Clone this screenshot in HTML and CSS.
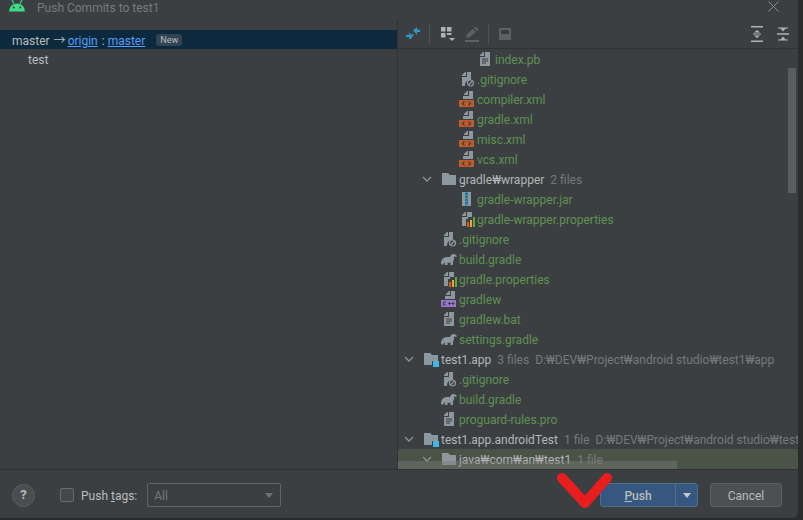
FILE: index.html
```html
<!DOCTYPE html>
<html lang="ko">
<head>
<meta charset="utf-8">
<title>Push Commits to test1</title>
<link rel="stylesheet" href="styles.css">
</head>
<body>
<svg class="defs" width="0" height="0" aria-hidden="true">
  <defs>
    <symbol id="doc" viewBox="0 0 16 16"><path d="M6 1h1v4H3V4zM8 1h5v14H3V6h5z" fill="#8d979e"/><path d="M5 8h6M5 10h6M5 12h4" stroke="#3c3f41" stroke-width="1"/></symbol>
    <symbol id="ignore" viewBox="0 0 16 16"><path d="M6 1h1v4H3V4zM8 1h4v8h-1a5 5 0 0 0-5 5v1H3V6h5z" fill="#8d979e"/><circle cx="11.500" cy="12" r="3" fill="none" stroke="#8d979e" stroke-width="1.200"/><path d="M9.500 14l4-4" stroke="#8d979e" stroke-width="1.200"/></symbol>
    <symbol id="xml" viewBox="0 0 16 16"><path d="M8 0h1v4H5V3zM10 0h4v8H4V5h6z" fill="#8d979e"/><rect x="0" y="9" width="15" height="7" fill="#c05a2a"/><path d="M5.500 10.500L3.500 12.500l2 2M9.500 10.500l2 2-2 2" fill="none" stroke="#3c3f41" stroke-width="1.200"/></symbol>
    <symbol id="props" viewBox="0 0 16 16"><path d="M6 1h1v4H3V4zM8 1h5v5H9v2H7v7H3V6h5z" fill="#8d979e"/><rect x="8" y="11" width="2" height="5" fill="#e05a1c"/><rect x="11" y="9" width="2" height="7" fill="#e8a92c"/><rect x="14" y="6" width="2" height="10" fill="#62a744"/></symbol>
    <symbol id="jar" viewBox="0 0 16 16"><rect x="3" y="1" width="9" height="14" fill="#8d979e"/><rect x="6" y="1" width="3" height="14" fill="#3592c4"/><path d="M6 3h3M6 6h3M6 9h3M6 12h3" stroke="#3c3f41" stroke-width=".8"/></symbol>
    <symbol id="gradle" viewBox="0 0 16 16"><path d="M0 13c0-4 2-7 6-7h3c.5-2 2-3 3.500-3 1.500 0 3 1 3.500 2.500l-1.500.5c-.5-.8-1-1-1.500-.8.5 2 0 4-1 5V14h-2.500v-2.500c-1 .4-2 .4-3 0V14H4v-2.500c-.8.4-1.500 1-2 2.500z" fill="#8d979e"/></symbol>
    <symbol id="shell" viewBox="0 0 16 16"><path d="M8 0h1v4H5V3zM10 0h4v8H4V5h6z" fill="#8d979e"/><rect x="0" y="9" width="15" height="7" fill="#9876c9"/><path d="M5 11H2.500v3H5M7 12.500h3M8.500 11v3M10.500 12.500h3M12 11v3" fill="none" stroke="#3c3f41" stroke-width="1"/></symbol>
    <symbol id="folder" viewBox="0 0 16 16"><path d="M1 2h6l2 2h6v10H1z" fill="#8d979e"/></symbol>
    <symbol id="module" viewBox="0 0 16 16"><path d="M1 2h6l2 2h6v6H9v4H1z" fill="#8d979e"/><rect x="10" y="10" width="6" height="6" fill="#40b6e0"/></symbol>
    <symbol id="chev" viewBox="0 0 12 12"><path d="M2 4l4 4 4-4" fill="none" stroke="#8f9294" stroke-width="1.300"/></symbol>
  </defs>
</svg>
<div class="window">
  <header class="titlebar">
    <svg class="droid" viewBox="0 0 18 12" width="18" height="12"><path d="M1 11.500a8 8 0 0 1 16 0z" fill="#3ddc84"/><path d="M4 0l2 3.500M14 0l-2 3.500" stroke="#3ddc84" stroke-width="1.200"/><circle cx="5.700" cy="7.500" r="1" fill="#3c3f41"/><circle cx="12.300" cy="7.500" r="1" fill="#3c3f41"/></svg>
    <span class="title">Push Commits to test1</span>
    <svg class="close" viewBox="0 0 11 11" width="11" height="11"><path d="M.5.500l10 10M10.500.500l-10 10" stroke="#8b8e90" stroke-width="1"/></svg>
  </header>
  <main class="split">
    <section class="commits">
      <div class="branch"><span>master</span><span class="arrow">→</span><a>origin</a><span class="colon">:</span><a>master</a><span class="tag">New</span></div>
      <div class="commit">test</div>
    </section>
    <section class="changes">
      <div class="toolbar">
        <svg class="tool t-diff" viewBox="0 0 16 16"><path d="M8 4.500L12 1v2.500h3v2.500h-3v3zM1 9h3V6.500l4 3.500-4 3.500V11H1z" fill="#3592c4"/><path d="M9 8l-3 5h-1.500l3-5z" fill="#3592c4"/></svg>
        <i class="sep"></i>
        <svg class="tool t-group" viewBox="0 0 16 16"><path d="M0 1h4.500v4.500H0zM6 1h4.500v4.500H6zM0 7h4.500v4.500H0zM6 7h4.500v2H6z" fill="#afb1b3"/><path d="M8 12h6l-3 3z" fill="#afb1b3"/></svg>
        <svg class="tool t-edit" viewBox="0 0 16 16"><path d="M9 3l3 3-6 5-4 1 1-4zM10 2l1.500-1.500 3 3L13 5z" fill="#5e6062"/><rect x="1" y="14" width="14" height="2" fill="#5e6062"/></svg>
        <i class="sep s2"></i>
        <svg class="tool t-save" viewBox="0 0 16 16"><path d="M1 2h12v12H1z" fill="#5e6062"/><rect x="3" y="4" width="8" height="4" fill="#3c3f41"/></svg>
        <span class="spacer"></span>
        <svg class="tool" viewBox="0 0 16 16"><path d="M2 0h12v1.500H2zM2 14.500h12V16H2zM5 6.500L8 4l3 2.500zM5 9.500L8 12l3-2.500z" fill="#afb1b3"/><rect x="4" y="7.500" width="8" height="1" fill="#afb1b3"/></svg>
        <svg class="tool t-last" viewBox="0 0 16 16"><path d="M2 7.300h12v1.400H2zM5 2h6L8 5.500zM5 14h6L8 10.500z" fill="#afb1b3"/><path d="M3 1.500h10v1H3zM3 13.500h10v1H3z" fill="#afb1b3"/></svg>
      </div>
      <div class="tree">
        <div class="row l3"><svg class="ico"><use href="#doc"/></svg><span class="add">index.pb</span></div>
        <div class="row l2"><svg class="ico"><use href="#ignore"/></svg><span class="add">.gitignore</span></div>
        <div class="row l2"><svg class="ico"><use href="#xml"/></svg><span class="add">compiler.xml</span></div>
        <div class="row l2"><svg class="ico"><use href="#xml"/></svg><span class="add">gradle.xml</span></div>
        <div class="row l2"><svg class="ico"><use href="#xml"/></svg><span class="add">misc.xml</span></div>
        <div class="row l2"><svg class="ico"><use href="#xml"/></svg><span class="add">vcs.xml</span></div>
        <div class="row l1 open"><svg class="chev"><use href="#chev"/></svg><svg class="ico"><use href="#folder"/></svg><span class="dir">gradle₩wrapper</span><span class="meta">2 files</span></div>
        <div class="row l2"><svg class="ico"><use href="#jar"/></svg><span class="add">gradle-wrapper.jar</span></div>
        <div class="row l2"><svg class="ico"><use href="#props"/></svg><span class="add">gradle-wrapper.properties</span></div>
        <div class="row l1"><svg class="ico"><use href="#ignore"/></svg><span class="add">.gitignore</span></div>
        <div class="row l1"><svg class="ico"><use href="#gradle"/></svg><span class="add">build.gradle</span></div>
        <div class="row l1"><svg class="ico"><use href="#props"/></svg><span class="add">gradle.properties</span></div>
        <div class="row l1"><svg class="ico"><use href="#shell"/></svg><span class="add">gradlew</span></div>
        <div class="row l1"><svg class="ico"><use href="#doc"/></svg><span class="add">gradlew.bat</span></div>
        <div class="row l1"><svg class="ico"><use href="#gradle"/></svg><span class="add">settings.gradle</span></div>
        <div class="row l0 open"><svg class="chev"><use href="#chev"/></svg><svg class="ico"><use href="#module"/></svg><span class="dir">test1.app</span><span class="meta">3 files</span><span class="meta">D:₩DEV₩Project₩android studio₩test1₩app</span></div>
        <div class="row l1"><svg class="ico"><use href="#ignore"/></svg><span class="add">.gitignore</span></div>
        <div class="row l1"><svg class="ico"><use href="#gradle"/></svg><span class="add">build.gradle</span></div>
        <div class="row l1"><svg class="ico"><use href="#doc"/></svg><span class="add">proguard-rules.pro</span></div>
        <div class="row l0 open"><svg class="chev"><use href="#chev"/></svg><svg class="ico"><use href="#module"/></svg><span class="dir">test1.app.androidTest</span><span class="meta">1 file</span><span class="meta">D:₩DEV₩Project₩android studio₩test1₩app₩src₩androidTest</span></div>
        <div class="row l1 open hit"><svg class="chev"><use href="#chev"/></svg><svg class="ico"><use href="#folder"/></svg><span class="dir">java₩com₩an₩test1</span><span class="meta">1 file</span></div>
        <div class="vthumb"></div>
        <div class="hthumb"></div>
      </div>
    </section>
  </main>
  <footer class="footer">
    <span class="help">?</span>
    <label class="check"><span class="box"></span><span class="check-text">Push <u>t</u>ags:</span></label>
    <div class="select"><span class="select-text">All</span><i class="caret"></i></div>
    <span class="spacer"></span>
    <div class="push"><span class="push-main"><u>P</u>ush</span><span class="push-arrow"><i class="caret light"></i></span></div>
    <div class="cancel">Cancel</div>
  </footer>
  <svg class="mark" viewBox="0 0 60 40" width="60" height="40"><path d="M10 10L33 35 55 10" fill="none" stroke="#e81e1e" stroke-width="10" stroke-linecap="round" stroke-linejoin="round"/></svg>
</div>
</body>
</html>
```
FILE: styles.css
```css
* { box-sizing: border-box; }
html, body { margin: 0; height: 100%; background: #2b2b2b; overflow: hidden; }
body { font: 12px/20px Roboto, "Noto Sans CJK KR", sans-serif; color: #bbbbbb; }
.defs { position: absolute; }
.window { position: relative; width: 798px; height: 518px; background: #3c3f41; border-bottom-right-radius: 6px; display: flex; flex-direction: column; overflow: hidden; }
.titlebar { height: 20px; flex: none; display: flex; align-items: flex-start; padding: 0 19px 0 8px; }
.droid { margin-top: 0; }
.title { margin: 1px 0 0 11px; line-height: 14px; color: #777a7c; }
.close { margin-left: auto; margin-top: 1px; }
.split { flex: 1; display: flex; min-height: 0; }
.commits { width: 398px; flex: none; padding-top: 10px; border-right: 1px solid #323232; }
.branch { height: 19px; background: #0d293e; display: flex; align-items: center; padding-left: 12px; gap: 4px; }
.branch span, .branch a { margin-top: 2px; }
.branch .arrow { margin-right: -2px; }
.branch .colon { margin-right: -1px; }
.branch .tag { margin: 0 0 0 7px; }
.branch a { color: #589df6; text-decoration: underline; }
.tag { font-size: 9px; line-height: 12px; background: #2f4454; border-radius: 3px; padding: 0 4px; }
.commit { padding: 1px 0 0 28px; }
.changes { flex: 1; min-width: 0; display: flex; flex-direction: column; }
.toolbar { height: 29px; flex: none; display: flex; align-items: center; padding: 0 7px; border-bottom: 1px solid #323232; }
.tool { width: 16px; height: 16px; flex: none; }
.t-group { margin-left: 11px; }
.t-edit { margin-left: 7px; }
.t-save { margin-left: 9px; }
.t-last { margin-left: 10px; }
.sep { width: 1px; height: 20px; margin-left: 8px; background: #515151; }
.spacer { flex: 1; }
.tree { position: relative; flex: 1; overflow: hidden; }
.row { height: 20px; display: flex; align-items: center; white-space: nowrap; }
.row span { margin-top: 2px; }
.l0 { padding-left: 25px; }
.l1 { padding-left: 43px; }
.l2 { padding-left: 61px; }
.l3 { padding-left: 79px; }
.l0.open { padding-left: 5px; }
.l1.open { padding-left: 23px; }
.chev { width: 12px; height: 12px; flex: none; margin-right: 8px; }
.ico { width: 16px; height: 16px; flex: none; margin-right: 2px; }
.add { color: #5f9152; }
.dir { color: #b4b6b8; }
.meta { color: #787878; margin-left: 6px; }
.hit { background: #4a5446; }
.vthumb { position: absolute; right: 2px; top: 19px; width: 8px; height: 125px; background: #5a5c5e; }
.hthumb { position: absolute; left: 0; bottom: 0; width: 279px; height: 8px; background: rgba(120, 122, 120, .45); }
.footer { height: 49px; flex: none; display: flex; align-items: center; padding: 2px 16px 0 12px; border-top: 1px solid #323232; }
.help { width: 23px; height: 23px; border-radius: 50%; background: #4b4e50; border: 1px solid #5a5d5f; color: #bbbbbb; font-weight: 700; font-size: 13px; display: flex; align-items: center; justify-content: center; }
.check { display: flex; align-items: center; margin-left: 25px; gap: 7px; }
.check-text, .select-text { margin-top: 2px; }
.box { width: 14px; height: 14px; border: 1px solid #6b6b6b; border-radius: 2px; background: #43494a; }
.select { width: 134px; height: 24px; margin-left: 10px; border: 1px solid #646464; border-radius: 2px; display: flex; align-items: center; justify-content: space-between; padding: 0 6px; color: #777777; }
.caret { width: 0; height: 0; border-left: 4.500px solid transparent; border-right: 4.500px solid transparent; border-top: 5px solid #6f7173; margin-right: 1px; }
.caret.light { border-top-color: #c8cacc; margin: 0; }
.push { width: 98px; height: 24px; border: 1px solid #4c708c; border-radius: 3px; background: #365880; display: flex; color: #bbbbbb; }
.push-main { flex: 1; text-align: center; line-height: 24px; font-weight: 500; }
.push-arrow { width: 22px; border-left: 1px solid #4c708c; display: flex; align-items: center; justify-content: center; }
.cancel { width: 72px; height: 24px; margin-left: 12px; border: 1px solid #5e6060; border-radius: 3px; background: #4c5052; text-align: center; line-height: 24px; }
.mark { position: absolute; left: 552px; top: 468px; }
```
